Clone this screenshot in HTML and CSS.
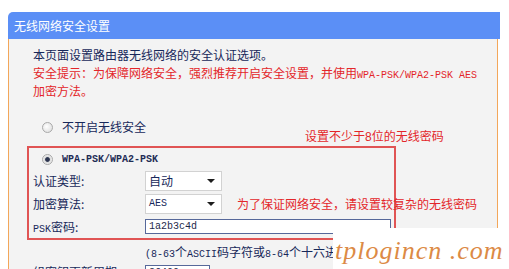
FILE: index.html
```html
<!DOCTYPE html>
<html lang="zh-CN">
<head>
    <meta charset="UTF-8">
    <title>无线网络安全设置</title>
    <link rel="stylesheet" href="styles.css">
</head>
<body>
    <div class="panel">
        <div class="panel-head">无线网络安全设置</div>
        <div class="panel-body">
            <p class="intro">本页面设置路由器无线网络的安全认证选项。</p>
            <p class="tip">安全提示：为保障网络安全，强烈推荐开启安全设置，并使用<span class="en">WPA-PSK/WPA2-PSK AES</span><br>加密方法。</p>

            <!-- 不加密 -->
            <div class="opt opt-off"><span class="radio"></span>不开启无线安全</div>

            <!-- WPA-PSK/WPA2-PSK，红框标注 -->
            <div class="mark-box">
                <div class="opt"><span class="radio on"></span><span class="en">WPA-PSK/WPA2-PSK</span></div>
                <div class="row">
                    <label>认证类型:</label>
                    <div class="select">自动<i class="arrow"></i></div>
                </div>
                <div class="row">
                    <label>加密算法:</label>
                    <div class="select"><span class="en">AES</span><i class="arrow"></i></div>
                    <span class="note">为了保证网络安全，请设置较复杂的无线密码</span>
                </div>
                <div class="row">
                    <label><span class="en">PSK</span>密码:</label>
                    <div class="input en">1a2b3c4d</div>
                </div>
            </div>

            <div class="hint"><span class="en">(8-63</span>个<span class="en">ASCII</span>码字符或<span class="en">8-64</span>个十六进制字符<span class="en">)</span></div>
            <div class="row row-last">
                <label>组密钥更新周期:</label>
                <div class="input input-short en">86400</div>
            </div>
        </div>
    </div>

    <div class="note-top">设置不少于<span class="num">8</span>位的无线密码</div>
    <div class="watermark">tplogincn .com</div>
</body>
</html>
```

FILE: styles.css
```css
/* 页面基础 */
body { margin: 0; background: #fff; font: 12px/18px "Noto Sans CJK SC", sans-serif; color: #17285a; height: 269px; overflow: hidden; position: relative; }
p { margin: 0; }
.en { font: 10px "Liberation Mono", monospace; }

/* 面板 */
.panel { margin: 12px 0 0 8px; width: 490px; }
.panel-head { height: 27px; line-height: 27px; margin-right: -2px; padding-left: 6px; background: #5b8ff6; color: #fff; border-top-left-radius: 5px; }
.panel-body { height: 240px; padding: 7px 0 0 24px; background: #f3f3f3; border-left: 1px solid #f3a75a; border-right: 1px solid #f3a75a; }

.tip { color: #e3262a; }

/* 单选项 */
.opt { display: flex; align-items: center; height: 18px; padding-left: 9px; }
.opt-off { margin-top: 18px; }
.radio { width: 9px; height: 9px; margin-right: 9px; border: 1px solid #a9a9a9; border-radius: 50%; background: radial-gradient(circle at 40% 40%, #fff 0, #e4e4e4 70%); }
.radio.on { background: radial-gradient(circle, #2c3550 0, #2c3550 30%, #dcdcdc 45%, #f4f4f4 80%); }
.mark-box .opt .en { font-weight: bold; color: #1f2d55; }

/* 红色标注框 */
.mark-box { width: 369px; margin: 10px 0 0 -6px; padding: 2px 0 0 4px; box-sizing: border-box; border: 2px solid #e05454; }
.mark-box .opt { height: 19px; }

.row { display: flex; align-items: center; height: 23px; }
.row label { width: 112px; flex: none; }

.select { display: flex; align-items: center; justify-content: space-between; flex: none; width: 77px; height: 20px; padding: 0 6px 0 3px; box-sizing: border-box; background: #fff; border: 1px solid #d2d2d2; }
.arrow { width: 0; height: 0; border-left: 4px solid transparent; border-right: 4px solid transparent; border-top: 4px solid #1d1d1d; }

.input { flex: none; width: 246px; height: 15px; line-height: 13px; padding-left: 3px; box-sizing: border-box; background: #fff; border: 1px solid #56689a; color: #1d2a4a; }
.input-short { width: 65px; }

.note { flex: none; margin-left: 15px; color: #e3262a; white-space: nowrap; }

.hint { height: 18px; margin: 3px 0 0 112px; white-space: nowrap; }
.row-last { height: 20px; margin-top: 1px; }

/* 截图上的标注和水印 */
.note-top { position: absolute; left: 305px; top: 127px; color: #e3262a; }
.note-top .num { font-family: "Liberation Sans", sans-serif; }
.watermark { position: absolute; left: 333px; top: 228px; width: 176px; height: 41px; padding-left: 2px; box-sizing: border-box; background: #fff; color: #dc8a45; font: italic 26px/46px "Liberation Serif", serif; letter-spacing: 1px; white-space: nowrap; }
```
